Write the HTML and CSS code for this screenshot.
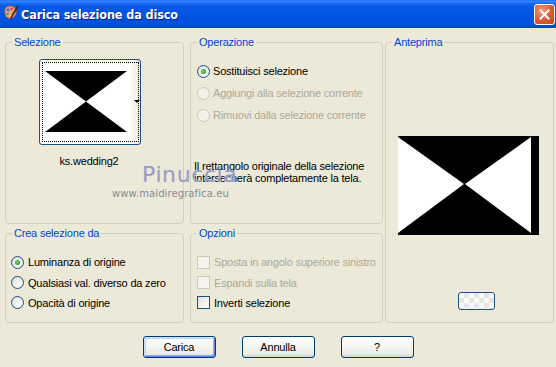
FILE: index.html
```html
<!DOCTYPE html>
<html lang="it">
<head>
<meta charset="utf-8">
<title>Carica selezione da disco</title>
<link rel="stylesheet" href="styles.css">
</head>
<body>
<div class="window">
  <header class="titlebar">
    <svg class="app-icon" width="16" height="16" viewBox="0 0 16 16">
      <path d="M2 4 Q3 1 7 1 Q12 1 13 5 Q14 9 11 12 Q8 15 5 13 Q1 11 2 4 Z" fill="#f2a070" stroke="#b35a2a" stroke-width="0.8"/>
      <circle cx="5" cy="5" r="1.4" fill="#2b6fd6"/>
      <circle cx="8.5" cy="4" r="1.2" fill="#e23a2a"/>
      <circle cx="4.5" cy="9" r="1.2" fill="#3aa84a"/>
      <circle cx="7.5" cy="10.5" r="1" fill="#f6e04a"/>
      <path d="M15 1 L9 11" stroke="#3a2a1a" stroke-width="1.6"/>
      <path d="M9 11 L8 14" stroke="#1a1aa0" stroke-width="1.6"/>
    </svg>
    <span class="title">Carica selezione da disco</span>
    <span class="close">
      <svg width="11" height="11" viewBox="0 0 11 11"><path d="M1.5 1.5 L9.5 9.5 M9.5 1.5 L1.5 9.5" stroke="#fff" stroke-width="2" stroke-linecap="square"/></svg>
    </span>
  </header>

  <main class="content">
    <div class="groups">
      <section class="group g-sel">
        <span class="legend">Selezione</span>
        <div class="thumb">
          <div class="thumb-btn">
            <div class="focus">
              <svg class="thumb-img" width="82" height="61" viewBox="0 0 82 61">
                <rect width="82" height="61" fill="#fff"/>
                <polygon points="0,0 82,0 41,30.5" fill="#000"/>
                <polygon points="0,61 82,61 41,30.5" fill="#000"/>
              </svg>
            </div>
            <span class="drop-arrow"></span>
          </div>
          <div class="thumb-name">ks.wedding2</div>
        </div>
      </section>

      <section class="group g-op">
        <span class="legend">Operazione</span>
        <ul class="choices op-choices">
          <li class="choice"><span class="radio checked"></span>Sostituisci selezione</li>
          <li class="choice disabled"><span class="radio"></span>Aggiungi alla selezione corrente</li>
          <li class="choice disabled"><span class="radio"></span>Rimuovi dalla selezione corrente</li>
        </ul>
        <p class="note">Il rettangolo originale della selezione<br>intersecherà completamente la tela.</p>
      </section>

      <section class="group g-prev">
        <span class="legend">Anteprima</span>
        <svg class="preview" width="141" height="99" viewBox="0 0 141 99">
          <rect width="141" height="99" fill="#000"/>
          <polygon points="0,1 66,48 0,97" fill="#fff"/>
          <polygon points="133,1 133,97 67,48" fill="#fff"/>
        </svg>
        <span class="mini-btn"></span>
      </section>

      <section class="group g-crea">
        <span class="legend">Crea selezione da</span>
        <ul class="choices crea-choices">
          <li class="choice"><span class="radio checked"></span>Luminanza di origine</li>
          <li class="choice"><span class="radio"></span>Qualsiasi val. diverso da zero</li>
          <li class="choice"><span class="radio"></span>Opacità di origine</li>
        </ul>
      </section>

      <section class="group g-opz">
        <span class="legend">Opzioni</span>
        <ul class="choices opz-choices">
          <li class="choice disabled"><span class="check"></span>Sposta in angolo superiore sinistro</li>
          <li class="choice disabled"><span class="check"></span>Espandi sulla tela</li>
          <li class="choice"><span class="check"></span>Inverti selezione</li>
        </ul>
      </section>
    </div>

    <div class="buttons">
      <button class="btn default">Carica</button>
      <button class="btn">Annulla</button>
      <button class="btn">?</button>
    </div>

    <div class="watermark">
      <span class="wm-name">Pinuccia</span>
      <span class="wm-url">www.maidiregrafica.eu</span>
    </div>
  </main>
</div>
</body>
</html>
```

FILE: styles.css
```css
* { box-sizing: border-box; }
html, body { margin: 0; padding: 0; }
body {
  width: 556px;
  height: 367px;
  overflow: hidden;
  background: #ece9d8;
  font-family: "Liberation Sans", Arial, sans-serif;
  font-size: 11px;
  letter-spacing: -0.2px;
  color: #000;
}
.window { width: 556px; height: 367px; background: #ece9d8; }

/* title bar */
.titlebar {
  height: 28px;
  display: flex;
  align-items: center;
  padding-left: 3px;
  background: linear-gradient(to bottom, #0b5fe6 0, #3b8dff 1px, #1a6ff5 3px, #0a5ae6 6px, #0055e3 50%, #0052dd 85%, #0044c8 100%);
}
.app-icon { display: block; margin-top: -2px; }
.title {
  margin-left: 2px;
  color: #fff;
  font-family: "DejaVu Sans Condensed", "DejaVu Sans", sans-serif;
  font-stretch: condensed;
  font-weight: bold;
  font-size: 12.5px;
  letter-spacing: -0.1px;
  text-shadow: 1px 1px 0 #0a1e8c;
}
.close {
  margin-left: auto;
  margin-right: 1px;
  width: 21px;
  height: 21px;
  border: 1px solid #fff;
  border-radius: 3px;
  background: radial-gradient(circle at 35% 30%, #f0a080 0, #e2613a 45%, #c9401a 100%);
  display: flex;
  align-items: center;
  justify-content: center;
}
.close svg { display: block; }

/* content */
.content { position: relative; padding: 14px 0 0 5px; }
.groups {
  display: grid;
  grid-template-columns: 179px 6px 193px 2px 169px;
  grid-template-rows: 182px 90px;
  row-gap: 9px;
  grid-template-areas:
    "sel . op . prev"
    "crea . opz . prev";
}
.group {
  position: relative;
  border: 1px solid #d0d0bf;
  border-radius: 4px;
}
.legend {
  position: absolute;
  top: -8px;
  left: 6px;
  padding: 0 2px;
  background: #ece9d8;
  color: #0046d5;
  line-height: 14px;
}
.g-sel { grid-area: sel; }
.g-op { grid-area: op; }
.g-prev { grid-area: prev; display: flex; flex-direction: column; }
.g-crea { grid-area: crea; }
.g-opz { grid-area: opz; }

/* thumbnail */
.thumb { width: 102px; margin: 16px 0 0 33px; }
.thumb-btn {
  position: relative;
  width: 102px;
  height: 86px;
  border: 1px solid #1c4f86;
  border-radius: 3px;
  background: linear-gradient(to right, #fff 0, #fff 88%, #ecebe4 100%);
  padding: 2px;
}
.focus {
  width: 97px;
  height: 80px;
  border: 1px dotted #000;
  padding: 8px 0 0 2px;
}
.thumb-img { display: block; }
.drop-arrow {
  position: absolute;
  left: 94px;
  top: 40px;
  width: 0;
  height: 0;
  border-left: 3px solid transparent;
  border-right: 3px solid transparent;
  border-top: 3px solid #000;
}
.thumb-name { text-align: center; margin-top: 10px; margin-left: -2px; line-height: 13px; }

/* choices */
.choices { list-style: none; margin: 0; padding: 0; }
.choice { display: flex; align-items: center; height: 22px; white-space: nowrap; }
.choice.disabled { color: #aca899; }
.op-choices { padding: 17px 0 0 6px; }
.crea-choices { padding: 18px 0 0 5px; }
.crea-choices .choice, .opz-choices .choice { height: 20.4px; }
.opz-choices { padding: 18px 0 0 6px; }

.radio {
  width: 13px;
  height: 13px;
  border-radius: 50%;
  border: 1px solid #1c5180;
  background: radial-gradient(circle at 65% 70%, #fff 0, #f0efea 40%, #d8d7cf 100%);
  margin-right: 3px;
  display: flex;
  align-items: center;
  justify-content: center;
  flex: none;
}
.radio.checked::after {
  content: "";
  width: 5px;
  height: 5px;
  border-radius: 50%;
  background: radial-gradient(circle at 40% 40%, #6fe06f 0, #21a121 70%);
}
.crea-choices .radio { margin-right: 4px; }
.choice.disabled .radio { border-color: #cac8bb; background: #f2f1ea; }

.check {
  width: 13px;
  height: 13px;
  border: 1px solid #1c5180;
  background: linear-gradient(135deg, #dcdcd7 0, #f2f2ef 60%, #fff 100%);
  margin-right: 4px;
  flex: none;
}
.choice.disabled .check { border-color: #cac8bb; background: #f4f3ee; }

.note { margin: 34px 0 0 3px; line-height: 12px; }

/* preview */
.preview { display: block; margin: 93px 0 0 12px; }
.mini-btn {
  width: 37px;
  height: 18px;
  margin: 57px 0 0 72px;
  border: 1px solid #1c4f86;
  border-radius: 3px;
  background-color: #fbfbf9;
  background-image:
    linear-gradient(45deg, #e6e6e2 25%, transparent 25%, transparent 75%, #e6e6e2 75%),
    linear-gradient(45deg, #e6e6e2 25%, transparent 25%, transparent 75%, #e6e6e2 75%);
  background-size: 10px 10px;
  background-position: 0 0, 5px 5px;
}

/* buttons */
.buttons {
  display: flex;
  justify-content: center;
  gap: 26px;
  margin-top: 13px;
  padding-right: 5px;
}
.btn {
  width: 73px;
  height: 22px;
  border: 1px solid #003c74;
  border-radius: 3px;
  background: linear-gradient(to bottom, #fff 0, #f7f7f4 40%, #ecebe6 85%, #d6d0c5 100%);
  font-family: "Liberation Sans", Arial, sans-serif;
  font-size: 11px;
  letter-spacing: -0.2px;
  color: #000;
  padding: 0;
}
.btn.default {
  box-shadow: inset 1px 1px 0 #cee7ff, inset -1px -1px 0 #6982ee, inset 2px 2px 0 #bcd4f6, inset -2px -2px 0 #89adf5;
}

/* watermark */
.watermark {
  position: absolute;
  z-index: 2;
  left: 112px;
  top: 135px;
  width: 130px;
  pointer-events: none;
  letter-spacing: 0;
}
.wm-name {
  display: block;
  margin-left: 30px;
  white-space: nowrap;
  font-family: "DejaVu Sans", Verdana, sans-serif;
  font-size: 22px;
  line-height: 24px;
  color: #9c9cc0;
  letter-spacing: 0.6px;
  text-shadow: 0 0 1px #d8d8e6;
}
.wm-url {
  display: block;
  margin-top: 1px;
  white-space: nowrap;
  font-family: "DejaVu Sans", Verdana, sans-serif;
  font-size: 10px;
  color: #8a8a98;
  letter-spacing: 0.1px;
}
```
